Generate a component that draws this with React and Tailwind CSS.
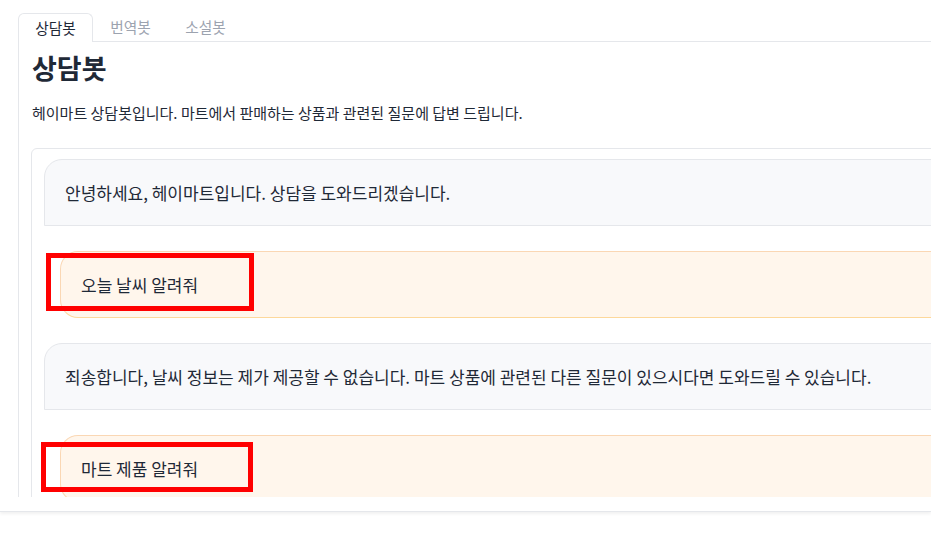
export default function App() {
  const font = { fontFamily: '"Noto Sans CJK KR", "Noto Sans", sans-serif' };

  return (
    <div
      className="relative w-[931px] h-[533px] overflow-hidden bg-white text-[#1f2937]"
      style={font}
    >
      {/* Scroll area */}
      <div className="h-[512px] border-b border-[#e5e7eb] shadow-[0_2px_3px_rgba(0,0,0,0.06)]">
        <div className="h-[497px] overflow-hidden">
          {/* Tabs */}
          <div className="flex pt-[13px] pl-[18px] w-[1200px]">
            <div className="w-[75px] h-[29px] flex items-center justify-center text-[14.7px] text-[#1f2937] border border-b-0 border-[#e5e7eb] rounded-t-md">
              상담봇
            </div>
            <div className="w-[75px] h-[29px] flex items-center justify-center text-[14.7px] text-[#9ca3af] border-b border-[#e5e7eb]">
              번역봇
            </div>
            <div className="w-[75px] h-[29px] flex items-center justify-center text-[14.7px] text-[#9ca3af] border-b border-[#e5e7eb]">
              소설봇
            </div>
            <div className="flex-1 border-b border-[#e5e7eb]" />
          </div>

          {/* Panel */}
          <div className="ml-[18px] w-[1200px] h-[500px] border-l border-[#e5e7eb] pl-[12px] pt-[9px]">
            <h1 className="text-[27px] leading-[34px] font-bold text-[#1f2937] pl-[1px]">
              상담봇
            </h1>
            <p className="mt-[18px] text-[15px] leading-[20px] text-[#1f2937] pl-[1px]">
              헤이마트 상담봇입니다. 마트에서 판매하는 상품과 관련된 질문에 답변 드립니다.
            </p>

            {/* Chat box */}
            <div className="mt-[25px] w-[1000px] h-[400px] border border-[#e5e7eb] rounded-tl-md pt-[10px] pl-[12px] pr-[12px]">
              <div className="flex flex-col gap-[25px]">
                <div className="h-[67px] flex items-center px-[20px] bg-[#f8f9fb] border border-[#e5e7eb] rounded-tl-[18px] rounded-tr-[18px] text-[17px]">
                  안녕하세요, 헤이마트입니다. 상담을 도와드리겠습니다.
                </div>
                <div className="ml-[16px] h-[67px] flex items-center px-[20px] bg-[#fff6ec] border border-[#fad7b4] border-b-[#fdd89b] rounded-l-[18px] text-[17px]">
                  오늘 날씨 알려줘
                </div>
                <div className="h-[67px] flex items-center px-[20px] bg-[#f8f9fb] border border-[#e5e7eb] rounded-tl-[18px] rounded-tr-[18px] text-[17px]">
                  죄송합니다, 날씨 정보는 제가 제공할 수 없습니다. 마트 상품에 관련된 다른 질문이 있으시다면 도와드릴 수 있습니다.
                </div>
                <div className="ml-[16px] h-[67px] flex items-center px-[20px] bg-[#fff6ec] border border-[#fad7b4] border-b-[#fdd89b] rounded-l-[18px] text-[17px]">
                  마트 제품 알려줘
                </div>
              </div>
            </div>
          </div>
        </div>
      </div>

      {/* Annotation boxes */}
      <div className="absolute left-[46px] top-[253px] w-[208px] h-[58px] border-[5px] border-[#ff0000]" />
      <div className="absolute left-[41px] top-[442px] w-[212px] h-[50px] border-[5px] border-[#ff0000]" />
    </div>
  );
}
